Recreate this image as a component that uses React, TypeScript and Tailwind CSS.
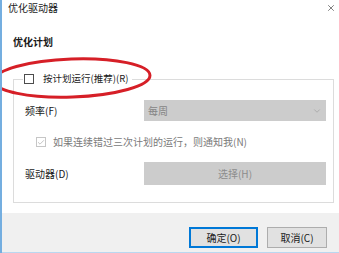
import { X, ChevronDown, Check } from "lucide-react";

const font = { fontFamily: '"Noto Sans CJK SC", "Microsoft YaHei", sans-serif' };

export default function App() {
  return (
    <div
      className="relative w-[339px] h-[253px] overflow-hidden bg-white border-l-2 border-[#74aee0] flex flex-col text-[#1a1a1a]"
      style={font}
    >
      {/* title bar */}
      <div className="h-[15px] flex items-center justify-between pl-[6px] pr-[3px]">
        <span className="text-[10px] leading-none">优化驱动器</span>
        <X className="w-[10px] h-[10px] text-[#333]" strokeWidth={1.5} />
      </div>

      <div className="flex-1 flex flex-col px-[11px]">
        <div className="mt-[22px] text-[10px] font-bold leading-none">优化计划</div>

        <fieldset className="mt-[25px] border border-[#dcdcdc] pl-[11px] pr-[7px] pb-[17px] w-[321px]">
          <legend className="-ml-[2px] pl-[1px] pr-[4px] flex items-center gap-[9px] h-[14px]">
            <span className="w-[10px] h-[10px] border border-[#4d4d4d] bg-white"></span>
            <span className="text-[9.5px] leading-none">按计划运行(推荐)(R)</span>
          </legend>

          <div className="mt-[14px] flex items-center">
            <span className="w-[119px] text-[10px] leading-none">频率(F)</span>
            <div className="flex-1 h-[21px] bg-[#cccccc] flex items-center justify-between pl-[4px] pr-[4px]">
              <span className="text-[10px] text-[#858585] leading-none">每周</span>
              <ChevronDown className="w-[10px] h-[10px] text-[#9a9a9a]" strokeWidth={1.5} />
            </div>
          </div>

          <div className="mt-[16px] ml-[11px] flex items-center gap-[7px]">
            <span className="w-[10px] h-[10px] border border-[#c6c6c6] flex items-center justify-center">
              <Check className="w-[9px] h-[9px] text-[#a8a8a8]" strokeWidth={2} />
            </span>
            <span className="text-[10px] text-[#7a7a7a] leading-none">如果连续错过三次计划的运行，则通知我(N)</span>
          </div>

          <div className="mt-[15px] flex items-center">
            <span className="w-[119px] text-[10px] leading-none">驱动器(D)</span>
            <div className="flex-1 h-[23px] bg-[#cccccc] flex items-center justify-center">
              <span className="text-[10px] text-[#8d8d8d] leading-none">选择(H)</span>
            </div>
          </div>
        </fieldset>
      </div>

      {/* footer */}
      <div className="h-[40px] bg-[#f0f0f0] border-b border-[#b9d7f0] flex items-start justify-end gap-[9px] pt-[14px] pr-[12px]">
        <button className="w-[69px] h-[21px] bg-[#e1e1e1] border-2 border-[#0078d7] text-[10px] leading-none">
          确定(O)
        </button>
        <button className="w-[60px] h-[21px] bg-[#e1e1e1] border border-[#adadad] text-[10px] leading-none">
          取消(C)
        </button>
      </div>

      {/* red annotation */}
      <svg className="absolute left-0 top-0 pointer-events-none" width="339" height="253">
        <ellipse
          cx="70"
          cy="78"
          rx="78"
          ry="19"
          fill="none"
          stroke="#d61f27"
          strokeWidth="3"
          transform="rotate(-2 70 78)"
        />
      </svg>
    </div>
  );
}
